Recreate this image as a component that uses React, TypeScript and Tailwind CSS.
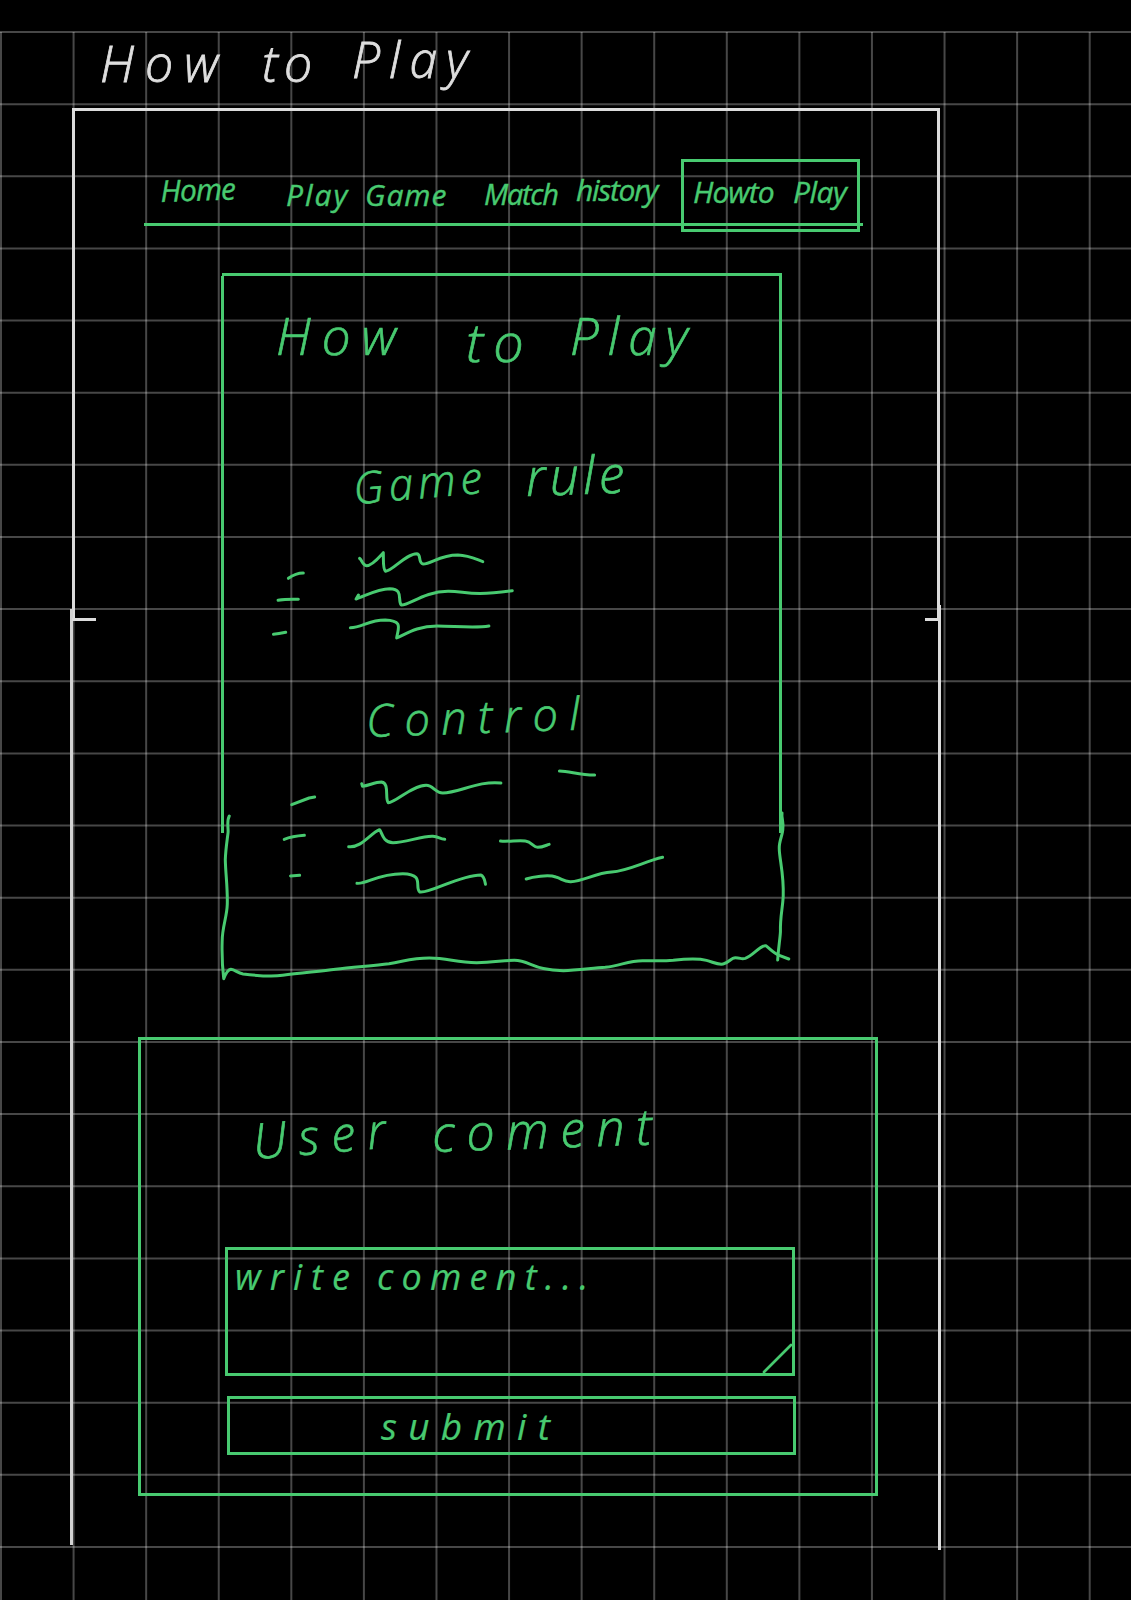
import type { ReactNode } from "react";

const COLUMNS = Array.from({ length: 16 }, (_, i) => 1 + i * 72.58);
const ROWS = Array.from({ length: 22 }, (_, i) => 32 + i * 72.14);

function GraphPaper() {
  return (
    <svg className="absolute inset-0 h-[1600px] w-[1131px]" viewBox="0 0 1131 1600" stroke="#ffffff" strokeOpacity="0.28" strokeWidth="2">
      {COLUMNS.map((x) => (
        <line key={x} x1={x} x2={x} y1="32" y2="1600" />
      ))}
      {ROWS.map((y) => (
        <line key={y} x1="0" x2="1131" y1={y} y2={y} />
      ))}
    </svg>
  );
}

function Word({ className, children }: { className: string; children: ReactNode }) {
  return <span className={`block shrink-0 origin-bottom-left whitespace-nowrap leading-none ${className}`}>{children}</span>;
}

function Strokes({ paths, transform }: { paths: string[]; transform: string }) {
  return (
    <g transform={transform} fill="none" stroke="#48ca70" strokeWidth="3" strokeLinecap="round" strokeLinejoin="round">
      {paths.map((d) => (
        <path key={d} d={d} vectorEffect="non-scaling-stroke" />
      ))}
    </g>
  );
}

const RULES = [
  "M417 115C422 118 425 136 435 137C450 137 467 113 479 98C480 119 477 147 485 154C505 151 538 101 567 101C579 102 569 130 583 132C605 131 627 105 674 105C703 106 720 117 739 125",
  "M231 175Q250 159 270 159",
  "M414 225L408 237C433 227 464 206 496 206C534 207 515 242 526 255C545 258 587 213 650 214C695 214 708 230 816 212",
  "M204 241Q224 237 257 238",
  "M393 323C423 323 440 300 484 300C533 302 517 326 514 354C540 341 567 318 620 318C662 318 719 325 755 318",
  "M192 343Q205 342 224 337",
];

const CONTROLS = [
  "M409 131L411 139C427 137 442 126 459 126C480 129 467 177 476 188C493 190 535 136 572 136C590 136 595 159 614 159C653 159 706 121 761 129",
  "M909 93C935 93 958 105 998 105",
  "M232 194Q252 185 276 174L290 171",
  "M376 320C407 325 431 280 454 269C460 275 461 307 488 308C518 308 564 287 589 289C604 290 606 297 619 298",
  "M760 303C780 306 808 299 823 303C839 306 844 322 854 322C866 322 875 316 883 313",
  "M213 298Q232 289 264 286",
  "M397 430C423 433 447 401 513 401C570 402 541 443 556 456C580 462 657 405 710 405C719 408 720 421 722 433",
  "M825 417C840 411 881 403 900 411C916 416 919 426 938 425C970 424 999 399 1041 396C1082 393 1123 365 1170 352",
  "M229 408L252 406",
];

const CARD_FOOT = [
  "M74 228C67 243 72 266 71 277C69 299 65 325 64 359C65 407 70 442 69 493C68 533 56 560 56 605C55 650 57 687 60 716C65 701 71 689 78 688C90 690 94 699 109 702C143 707 181 711 209 706C254 698 302 695 343 688C384 681 435 678 478 671C519 663 537 654 580 654C628 654 647 668 700 668C742 668 765 661 795 661C834 661 845 692 919 692C954 692 992 684 1025 682C1064 677 1083 662 1119 662C1156 662 1164 664 1197 661C1230 656 1259 654 1281 661C1298 666 1308 675 1323 672C1337 669 1343 653 1354 653C1368 653 1368 659 1379 655C1399 647 1417 615 1431 617C1444 629 1450 640 1465 646L1489 657",
  "M1472 219C1470 232 1477 249 1474 267C1474 284 1464 304 1465 325C1465 357 1477 400 1475 470C1473 510 1467 530 1468 575C1467 598 1463 620 1461 660",
];

function NavBar() {
  return (
    <nav className="ml-[72px] mt-[48px] flex h-[67px] w-[719px] border-b-3 text-[30px] [-webkit-text-stroke:0.4px]">
      <a className="w-[125px] pl-[17px] pt-[17px]">
        <Word className="-rotate-2 tracking-[-1px]">Home</Word>
      </a>
      <a className="flex w-[215px] pl-[17px] pt-[21px]">
        <Word className="w-[79px] tracking-[2px]">Play</Word>
        <Word className="tracking-[1px]">Game</Word>
      </a>
      <a className="flex w-[197px] pt-[20px]">
        <Word className="w-[92px] text-[29px] tracking-[-1.3px]">Match</Word>
        <Word className="-translate-y-1 text-[30px] tracking-[-1.3px]">history</Word>
      </a>
      <a className="flex h-[73px] w-[179px] shrink-0 border-3 pl-[9px] pt-[15px]">
        <Word className="w-[100px] tracking-[-1px]">Howto</Word>
        <Word className="tracking-[-0.5px]">Play</Word>
      </a>
    </nav>
  );
}

function GuideCard() {
  return (
    <section className="relative ml-[150px] mt-[47px] h-[765px] w-[560px] border-t-3 font-light [-webkit-text-stroke:0.7px]">
      <div className="absolute -left-px top-0 h-[557px] w-[3px] bg-[#48ca70]" />
      <div className="absolute right-0 top-0 h-[557px] w-[3px] bg-[#48ca70]" />
      <h2 className="flex h-[148px] pl-[54px] pt-[34px] text-[51px]">
        <Word className="w-[190px] tracking-[11px]">How</Word>
        <Word className="w-[104px] translate-y-1 text-[54px] tracking-[10px]">to</Word>
        <Word className="tracking-[9px]">Play</Word>
      </h2>
      <h3 className="flex h-[116px] pl-[136px] pt-[26px] text-[52px]">
        <Word className="w-[170px] -rotate-5 pt-[15px] text-[44px] tracking-[5px]">Game</Word>
        <Word className="-rotate-2 tracking-[4px]">rule</Word>
      </h3>
      <svg className="block h-[120px] w-[560px]" viewBox="222 540 560 120">
        <Strokes paths={RULES} transform="translate(200 520) scale(.38265 .33333)" />
      </svg>
      <h3 className="h-[100px] pl-[145px] pt-[37px] text-[45px]">
        <Word className="-rotate-2 tracking-[11.5px]">Control</Word>
      </h3>
      <svg className="block h-[150px] w-[560px]" viewBox="222 760 560 150">
        <Strokes paths={CONTROLS} transform="translate(200 740) scale(.3954 .33333)" />
      </svg>
      <svg className="absolute -left-[12px] top-[534px] h-[180px] w-[600px]" viewBox="210 810 600 180">
        <Strokes paths={CARD_FOOT} transform="translate(200 740) scale(.3954 .33333)" />
      </svg>
    </section>
  );
}

function CommentForm() {
  return (
    <section className="-mt-px ml-[66px] h-[459px] w-[740px] border-3">
      <h2 className="flex h-[207px] pl-[121px] pt-[72px] text-[50px] font-light [-webkit-text-stroke:0.7px]">
        <Word className="w-[174px] -rotate-5 pt-[4px] text-[49px] tracking-[12px]">User</Word>
        <Word className="-translate-y-1 -rotate-2 tracking-[11.5px]">coment</Word>
      </h2>
      <div className="relative ml-[84px] flex h-[129px] w-[570px] border-3 pl-[7px] pt-[9px] text-[36px] [-webkit-text-stroke:0.2px]">
        <Word className="w-[142px] tracking-[9px]">write</Word>
        <Word className="tracking-[8.2px]">coment...</Word>
        <svg className="absolute bottom-0 right-0 h-[30px] w-[30px]" viewBox="0 0 30 30">
          <path d="M2 29L29 2" stroke="#48ca70" strokeWidth="2.7" strokeLinecap="round" />
        </svg>
      </div>
      <button className="ml-[86px] mt-[20px] block h-[59px] w-[569px] border-3 pl-[151px] text-left text-[37px] [-webkit-text-stroke:0.2px]">
        <Word className="tracking-[11.3px]">submit</Word>
      </button>
    </section>
  );
}

export default function App() {
  return (
    <div className="relative h-[1600px] w-[1131px] overflow-hidden bg-black font-['Open_Sans',sans-serif] italic text-[#48ca70]">
      <GraphPaper />
      <div className="relative">
        <header className="flex h-[108px] pl-[100px] pt-[38px] text-[50px] font-light text-[#dedede] [-webkit-text-stroke:0.8px]">
          <Word className="w-[162px] tracking-[11px]">How</Word>
          <Word className="w-[90px] tracking-[6px]">to</Word>
          <Word className="-translate-y-1 tracking-[9px]">Play</Word>
        </header>
        <main className="relative ml-[72px] flow-root h-[1442px] w-[868px] pt-[3px]">
          <div className="absolute left-0 top-0 h-[3px] w-[868px] bg-[#dcdcdc]" />
          <div className="absolute left-0 top-0 h-[512px] w-[3px] bg-[#dcdcdc]" />
          <div className="absolute -left-[2px] top-[501px] h-[936px] w-[3px] bg-[#d2d2d2]" />
          <div className="absolute right-0 top-0 h-[512px] w-[3px] bg-[#dcdcdc]" />
          <div className="absolute -right-px top-[497px] h-[945px] w-[3px] bg-[#dcdcdc]" />
          <div className="absolute left-0 top-[510px] h-[3px] w-[24px] bg-[#dcdcdc]" />
          <div className="absolute right-0 top-[510px] h-[3px] w-[15px] bg-[#dcdcdc]" />
          <NavBar />
          <GuideCard />
          <CommentForm />
        </main>
      </div>
    </div>
  );
}
